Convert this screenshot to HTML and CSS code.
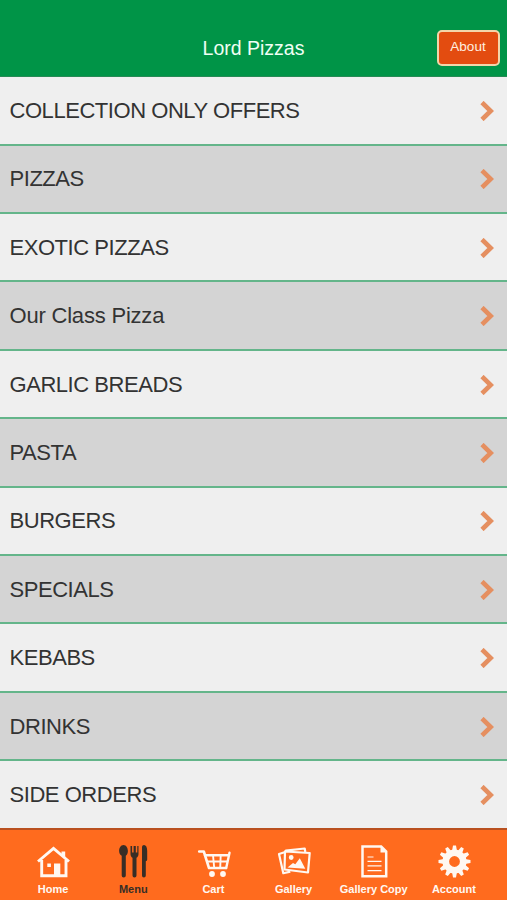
FILE: index.html
```html
<!DOCTYPE html>
<html lang="en">
<head>
<meta charset="utf-8">
<title>Lord Pizzas</title>
<link rel="stylesheet" href="styles.css">
</head>
<body>
<svg class="defs" width="0" height="0" aria-hidden="true">
  <symbol id="chevron" viewBox="0 0 14 20"><path d="M2 1.5 10.7 10 2 18.5" fill="none" stroke="currentColor" stroke-width="4.600"/></symbol>
</svg>
<div class="app">
  <header class="header">
    <span></span>
    <h1 class="title">Lord Pizzas</h1>
    <button class="about">About</button>
  </header>
  <main class="list">
    <a class="row"><span class="caps">COLLECTION ONLY OFFERS</span><svg class="chev"><use href="#chevron"/></svg></a>
    <a class="row"><span class="caps">PIZZAS</span><svg class="chev"><use href="#chevron"/></svg></a>
    <a class="row"><span class="caps">EXOTIC PIZZAS</span><svg class="chev"><use href="#chevron"/></svg></a>
    <a class="row"><span class="mixed">Our Class Pizza</span><svg class="chev"><use href="#chevron"/></svg></a>
    <a class="row"><span class="caps">GARLIC BREADS</span><svg class="chev"><use href="#chevron"/></svg></a>
    <a class="row"><span class="caps">PASTA</span><svg class="chev"><use href="#chevron"/></svg></a>
    <a class="row"><span class="caps">BURGERS</span><svg class="chev"><use href="#chevron"/></svg></a>
    <a class="row"><span class="caps">SPECIALS</span><svg class="chev"><use href="#chevron"/></svg></a>
    <a class="row"><span class="caps">KEBABS</span><svg class="chev"><use href="#chevron"/></svg></a>
    <a class="row"><span class="caps">DRINKS</span><svg class="chev"><use href="#chevron"/></svg></a>
    <a class="row"><span class="caps">SIDE ORDERS</span><svg class="chev"><use href="#chevron"/></svg></a>
  </main>
  <nav class="tabs">
    <a class="tab">
      <svg class="icon" viewBox="0 0 36 36"><path d="M3 17.500 18.500 4.500 34 17.500M6.700 16v15.700h24.300V16" fill="none" stroke="currentColor" stroke-width="2.900"/><path d="M26.500 7.500h3.700v6l-3.700-3zM19 19.500h6.300V32H19zM12.300 19.500h3.600v3.600h-3.600z" fill="currentColor"/></svg>
      <span>Home</span>
    </a>
    <a class="tab active">
      <svg class="icon" viewBox="0 0 36 36"><path d="M8.500 1C5.800 1 4.100 4 4.100 7c0 2.300 1.100 4 2.600 4.800V31.500a2 2 0 0 0 4.100 0V11.800C12 11 12.900 9.300 12.900 7c0-3-1.700-6-4.400-6zM15.500 2v8c0 2 .8 3 2 3.800V31.500a2 2 0 0 0 4 0V13.800c1.200-.8 2-1.800 2-3.800V2h-1.200v6.500h-1.500V2h-2.200v6.500h-1.500V2zM27 3.200c0-1.400 1-2.200 2-2.200 2 0 3.200 2.300 3.200 6v8.500c0 1-.8 1.500-1.400 1.700V31.500a1.900 1.900 0 0 1-3.800 0z" fill="currentColor"/></svg>
      <span>Menu</span>
    </a>
    <a class="tab">
      <svg class="icon" viewBox="0 0 36 36"><g fill="none" stroke="currentColor"><path d="M4.200 7.500h4.600l5.200 16.500h17" stroke-width="2.600" stroke-linejoin="round" stroke-linecap="round"/><path d="M10 11.300h24L31.200 24M34 11.300l.5-2.600" stroke-width="2.400" stroke-linecap="round"/><path d="M11.500 17.500h21M18 11l1.200 13M25.700 11 25.200 24" stroke-width="1.900"/></g><circle cx="17" cy="30" r="2.900" fill="currentColor"/><circle cx="28" cy="30" r="2.900" fill="currentColor"/></svg>
      <span>Cart</span>
    </a>
    <a class="tab">
      <svg class="icon" viewBox="0 0 36 36"><g fill="none" stroke="currentColor" stroke-width="2.200" stroke-linejoin="round"><path d="m9 7.500 24.700 1.500L32 28.500 8.500 25.500z"/><path d="M8.500 8.200 3 10l4.300 19.200 7-1.600M10 7.400 9.700 6.700l19-2.200.6 3.500"/></g><path d="m11.500 23.500 5.500-4.500 2.300 1.300 4.500-6 5.500 10.400zM12.800 13.500a2.400 2.400 0 1 0 4.800 0 2.400 2.400 0 0 0-4.800 0" fill="currentColor"/></svg>
      <span>Gallery</span>
    </a>
    <a class="tab">
      <svg class="icon" viewBox="0 0 36 36"><path d="M6.500 2.500h18.700l5 5V32.200H6.500z" fill="none" stroke="currentColor" stroke-width="2.500"/><path d="M24.500 1.500v7h6" fill="currentColor"/><path d="M11.500 13h6M11.500 17.300h14M11.500 21.900h14M11.500 26.600h14" stroke="currentColor" stroke-width="1.200"/></svg>
      <span>Gallery Copy</span>
    </a>
    <a class="tab">
      <svg class="icon" viewBox="0 0 36 36"><circle cx="18.500" cy="17.500" r="8.700" fill="none" stroke="currentColor" stroke-width="6.600"/><g fill="currentColor"><path id="tooth" d="M16 7l1-5.500h3L21 7zM16 28l1 5.500h3l1-5.500z"/><use href="#tooth" transform="rotate(30 18.500 17.500)"/><use href="#tooth" transform="rotate(60 18.500 17.500)"/><use href="#tooth" transform="rotate(90 18.500 17.500)"/><use href="#tooth" transform="rotate(120 18.500 17.500)"/><use href="#tooth" transform="rotate(150 18.500 17.500)"/></g></svg>
      <span>Account</span>
    </a>
  </nav>
</div>
</body>
</html>
```
FILE: styles.css
```css
* { box-sizing: border-box; }
body {
  margin: 0;
  font-family: "Liberation Sans", Arial, sans-serif;
}
.defs { display: none; }
.app {
  width: 507px;
  height: 900px;
  display: flex;
  flex-direction: column;
  overflow: hidden;
}
.header {
  flex: none;
  height: 77px;
  padding: 19px 7px 0;
  display: grid;
  grid-template-columns: 1fr auto 1fr;
  align-items: center;
  background: #009447;
  border-bottom: 1px solid #268a55;
  color: #f0fff4;
}
.title {
  margin: 1px 0 0;
  font-size: 19.5px;
  font-weight: 400;
}
.about {
  justify-self: end;
  width: 63px;
  height: 36px;
  padding: 0 1px 2px 0;
  border: 2px solid #f3d5aa;
  border-radius: 5px;
  background: #e34c10;
  color: #fff0e0;
  font: 13.500px "Liberation Sans", Arial, sans-serif;
}
.list { flex: none; height: 751px; overflow: hidden; }
.row {
  height: 68.400px;
  padding: 1px 13px 0 9.500px;
  display: flex;
  align-items: center;
  justify-content: space-between;
  border-bottom: 2px solid #64b58a;
  background: #efefef;
  color: #333;
  font-size: 22px;
}
.row:first-child { height: 68.700px; }
.row:nth-child(even) { background: #d4d4d4; }
.row:last-child { border-bottom-color: transparent; }
.caps { letter-spacing: -0.450px; }
.mixed { letter-spacing: -0.200px; }
.chev { width: 14px; height: 20px; color: #e58f60; }
.tabs {
  flex: none;
  height: 72px;
  padding: 14px 13px 0;
  display: grid;
  grid-template-columns: repeat(6, 1fr);
  background: #ff6b1e;
  border-top: 2px solid #b9501f;
}
.tab {
  display: flex;
  flex-direction: column;
  align-items: center;
  gap: 2px;
  color: #fff8f2;
  font-size: 11px;
  font-weight: 700;
  line-height: 14px;
  white-space: nowrap;
}
.tab.active { color: #382e26; }
.icon { width: 36px; height: 36px; }
```
